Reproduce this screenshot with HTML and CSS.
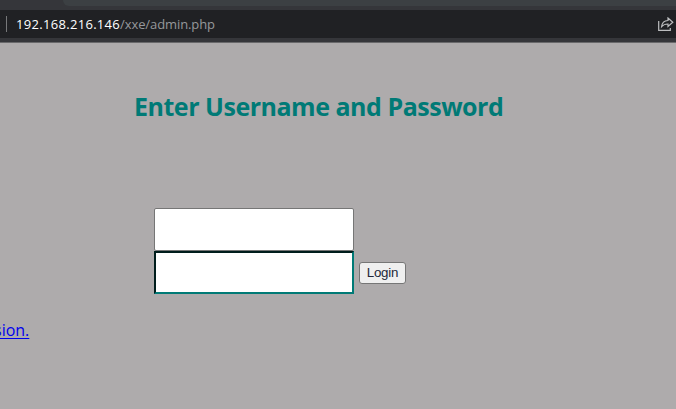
FILE: index.html
```html
<!DOCTYPE html>
<html lang="en">
<head>
<meta charset="utf-8">
<title>Admin login</title>
<link rel="stylesheet" href="styles.css">
</head>
<body>
<header class="browser">
  <div class="tabs"><div class="tab-strip"></div></div>
  <div class="address">
    <span class="divider"></span>
    <span class="url"><span class="host">192.168.216.146</span><span class="path">/xxe/admin.php</span></span>
    <svg class="share" width="16" height="15" viewBox="0 0 16 15" fill="none" stroke="#bdbec0" stroke-width="1.2">
      <path d="M.7 4v9.4h11.6V11"/>
      <path d="M3.6 9.7C4 5.8 6.2 3.7 10 3.5V1l4.8 4.3L10 9.4V7C7.200 7 5.200 7.800 3.600 9.700Z"/>
    </svg>
  </div>
</header>
<main class="page">
  <h1 class="title">Enter Username and Password</h1>
  <form class="login">
    <input class="field" type="text" aria-label="Username">
    <div class="row">
      <input class="field inset" type="password" aria-label="Password">
      <button class="submit" type="button"><span>Login</span></button>
    </div>
  </form>
  <div class="note"><a class="link" href="#">sion.</a></div>
</main>
</body>
</html>
```
FILE: styles.css
```css
* { box-sizing: border-box; }
body {
  margin: 0;
  height: 409px;
  overflow: hidden;
  background: #aeabac;
  font-family: "Open Sans", "Noto Sans", sans-serif;
}
.browser {
  height: 43px;
  background: #35363a;
  border-bottom: 1px solid #69696b;
}
.tabs { height: 10px; padding-left: 63px; }
.tab-strip {
  height: 6px;
  background: #3c4043;
  border-bottom-left-radius: 6px;
}
.address {
  height: 28px;
  display: flex;
  align-items: center;
  padding: 0 2px 0 6px;
  background: #202124;
}
.divider { width: 1px; height: 16px; background: #77787a; }
.url {
  margin-left: 9px;
  font-size: 13px;
  line-height: 18px;
  white-space: nowrap;
}
.host { color: #fff; letter-spacing: 0.31px; }
.path { color: #96989b; letter-spacing: -0.1px; }
.share { margin-left: auto; }
.page { padding-top: 45px; }
.title {
  margin: 0 0 0 134px;
  font-size: 25px;
  line-height: 36px;
  font-weight: 700;
  letter-spacing: -0.48px;
  color: #007a76;
  white-space: nowrap;
}
.login { margin: 84px 0 0 154px; }
.field {
  display: block;
  width: 200px;
  height: 43px;
  margin: 0;
  padding: 1px 4px;
  background: #fff;
  border: 1px solid #767676;
  border-radius: 2px;
  outline: none;
}
.inset {
  border: 2px solid;
  border-color: #001d1c #007a76 #007a76 #001d1c;
  border-radius: 0;
}
.row { display: flex; align-items: center; gap: 5px; }
.submit {
  width: 47px;
  height: 22px;
  padding: 0;
  border: 1px solid #767676;
  border-radius: 3px;
  background: #efefef;
  color: #23273a;
  font: 13.333px/20px "Liberation Sans", Arial, sans-serif;
  letter-spacing: -0.2px;
}
.note { margin-top: 24px; overflow: hidden; }
.link {
  display: block;
  width: max-content;
  margin-left: -6px;
  font-size: 16px;
  line-height: 24px;
  color: #0000ee;
  text-underline-offset: 2px;
}
```
